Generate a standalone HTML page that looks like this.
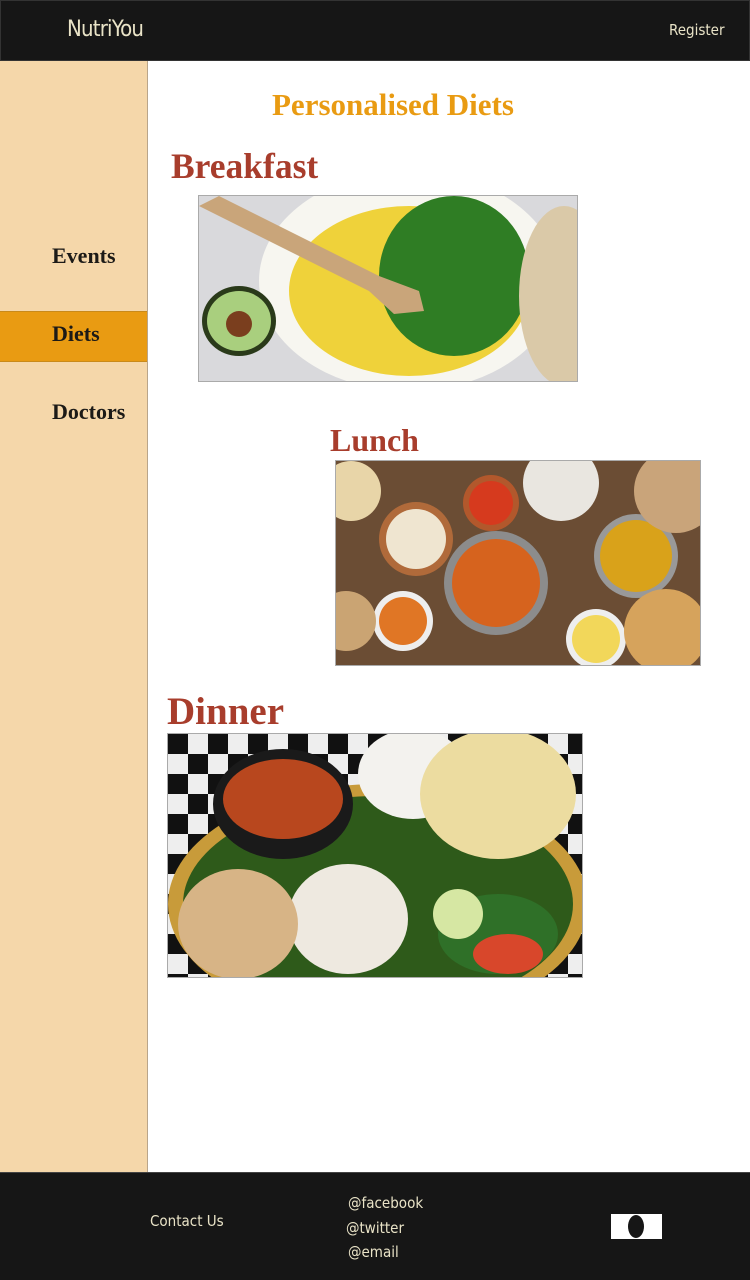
<!DOCTYPE html>
<html><head><meta charset="utf-8"><style>
*{margin:0;padding:0;box-sizing:border-box}
body{width:750px;height:1280px;position:relative;background:#fff;font-family:"Liberation Serif",serif;overflow:hidden}
.hdr{position:absolute;left:0;top:0;width:750px;height:61px;background:#161616;border:1px solid #333}
.logo{position:absolute;left:66px;top:16px;color:#e9e3c7;font:22px "DejaVu Sans Condensed","Liberation Sans",sans-serif;letter-spacing:-0.8px}
.reg{position:absolute;left:668px;top:20px;color:#e9e3c7;font:15px "DejaVu Sans Condensed","Liberation Sans",sans-serif}
.side{position:absolute;left:0;top:61px;width:148px;height:1111px;background:#f5d7aa;border-right:1px solid #b9a58a}
.nav{position:absolute;left:52px;font-weight:bold;font-size:22px;color:#1c1a17}
.act{position:absolute;left:0;top:311px;width:147px;height:51px;background:#e99b12;border-top:1px solid #c98a1a;border-bottom:1px solid #c98a1a}
h1{position:absolute;left:272px;top:87px;font-size:31px;color:#e99b12;font-weight:bold}
.t{position:absolute;color:#a83d2c;font-weight:bold}
.img{position:absolute;border:1px solid #aaa;overflow:hidden}
.ftr{position:absolute;left:0;top:1172px;width:750px;height:108px;background:#161616;border-top:1px solid #444}
.f{position:absolute;color:#e9e3c7;font:15px "DejaVu Sans Condensed","Liberation Sans",sans-serif}
</style></head><body>
<div class="hdr"><div class="logo">NutriYou</div><div class="reg">Register</div></div>
<div class="side"></div>
<div class="act"></div>
<div class="nav" style="top:243px">Events</div>
<div class="nav" style="top:321px">Diets</div>
<div class="nav" style="top:399px">Doctors</div>
<h1>Personalised Diets</h1>
<div class="t" style="left:171px;top:145px;font-size:35.5px">Breakfast</div>
<div class="img" style="left:198px;top:195px;width:380px;height:187px">
<svg width="380" height="187"><rect width="380" height="187" fill="#d9d9dc"/>
<ellipse cx="210" cy="85" rx="150" ry="110" fill="#f7f6f0"/>
<ellipse cx="210" cy="95" rx="120" ry="85" fill="#efd23a"/>
<ellipse cx="255" cy="80" rx="75" ry="80" fill="#2f7d24"/>
<path d="M0 10 L20 0 L180 80 L220 95 L225 115 L195 118 L170 95 Z" fill="#c9a57a"/>
<ellipse cx="40" cy="125" rx="37" ry="35" fill="#2a3a1a"/><ellipse cx="40" cy="125" rx="32" ry="30" fill="#a9cf7e"/><circle cx="40" cy="128" r="13" fill="#7a3e1e"/>
<ellipse cx="365" cy="100" rx="45" ry="90" fill="#dac9a8"/></svg></div>
<div class="t" style="left:330px;top:422px;font-size:32px">Lunch</div>
<div class="img" style="left:335px;top:460px;width:366px;height:206px">
<svg width="366" height="206"><rect width="366" height="206" fill="#6b4d34"/>
<circle cx="80" cy="78" r="37" fill="#b06a3a"/><circle cx="80" cy="78" r="30" fill="#efe5d0"/>
<circle cx="155" cy="42" r="28" fill="#b2582c"/><circle cx="155" cy="42" r="22" fill="#d63a1e"/>
<circle cx="225" cy="22" r="38" fill="#e9e6e0"/>
<circle cx="300" cy="95" r="42" fill="#999"/><circle cx="300" cy="95" r="36" fill="#d9a21a"/>
<circle cx="160" cy="122" r="52" fill="#8c8c8c"/><circle cx="160" cy="122" r="44" fill="#d6631e"/>
<circle cx="67" cy="160" r="30" fill="#eee"/><circle cx="67" cy="160" r="24" fill="#e07625"/>
<circle cx="260" cy="178" r="30" fill="#eee"/><circle cx="260" cy="178" r="24" fill="#f2d75a"/>
<circle cx="340" cy="30" r="42" fill="#c9a47a"/><circle cx="330" cy="170" r="42" fill="#d6a35c"/>
<circle cx="15" cy="30" r="30" fill="#e8d5a8"/><circle cx="10" cy="160" r="30" fill="#caa473"/></svg></div>
<div class="t" style="left:167px;top:689px;font-size:39px">Dinner</div>
<div class="img" style="left:167px;top:733px;width:416px;height:245px">
<svg width="416" height="245"><defs><pattern id="c" width="40" height="40" patternUnits="userSpaceOnUse"><rect width="40" height="40" fill="#eee"/><rect width="20" height="20" fill="#111"/><rect x="20" y="20" width="20" height="20" fill="#111"/></pattern></defs>
<rect width="416" height="245" fill="url(#c)"/>
<ellipse cx="210" cy="170" rx="210" ry="120" fill="#c89b3a"/><ellipse cx="210" cy="170" rx="195" ry="108" fill="#2e5a1a"/>
<ellipse cx="245" cy="40" rx="55" ry="45" fill="#f3f2ee"/>
<ellipse cx="330" cy="60" rx="78" ry="65" fill="#ecdca0"/>
<ellipse cx="115" cy="70" rx="70" ry="55" fill="#1a1a1a"/><ellipse cx="115" cy="65" rx="60" ry="40" fill="#b8471e"/>
<ellipse cx="180" cy="185" rx="60" ry="55" fill="#eee9e0"/>
<ellipse cx="70" cy="190" rx="60" ry="55" fill="#d7b486"/>
<ellipse cx="330" cy="200" rx="60" ry="40" fill="#2f7028"/><circle cx="290" cy="180" r="25" fill="#d6e7a3"/><ellipse cx="340" cy="220" rx="35" ry="20" fill="#d8472b"/></svg></div>
<div class="ftr">
<div class="f" style="left:150px;top:39px">Contact Us</div>
<div class="f" style="left:348px;top:21px">@facebook</div>
<div class="f" style="left:346px;top:46px">@twitter</div>
<div class="f" style="left:348px;top:70px">@email</div>
<div style="position:absolute;left:611px;top:41px;width:51px;height:25px;background:#fff"><div style="position:absolute;left:17px;top:1px;width:16px;height:23px;border-radius:50%;background:#161616"></div></div>
</div>
</body></html>
